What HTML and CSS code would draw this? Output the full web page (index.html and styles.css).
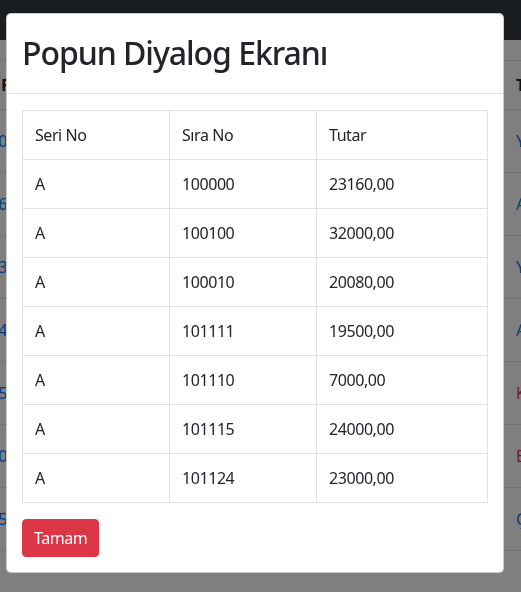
FILE: index.html
```html
<!DOCTYPE html>
<html lang="tr">
<head>
<meta charset="utf-8">
<title>Popun Diyalog Ekranı</title>
<link rel="stylesheet" href="styles.css">
</head>
<body>
<div class="page">
  <nav class="navbar"></nav>
  <div class="bg-table">
    <div class="bg-row bg-head">
      <div class="bg-cell bg-left bg-start">Fatura No</div>
      <div class="bg-mid"></div>
      <div class="bg-cell bg-right">Tarih</div>
    </div>
    <div class="bg-row">
      <div class="bg-cell bg-left link">2010</div>
      <div class="bg-mid"></div>
      <div class="bg-cell bg-right link">Yalova</div>
    </div>
    <div class="bg-row">
      <div class="bg-cell bg-left link">2006</div>
      <div class="bg-mid"></div>
      <div class="bg-cell bg-right link">Ankara</div>
    </div>
    <div class="bg-row">
      <div class="bg-cell bg-left link">2003</div>
      <div class="bg-mid"></div>
      <div class="bg-cell bg-right link">Yozgat</div>
    </div>
    <div class="bg-row">
      <div class="bg-cell bg-left link">2004</div>
      <div class="bg-mid"></div>
      <div class="bg-cell bg-right link">Adana</div>
    </div>
    <div class="bg-row">
      <div class="bg-cell bg-left link">2005</div>
      <div class="bg-mid"></div>
      <div class="bg-cell bg-right danger">Kars</div>
    </div>
    <div class="bg-row">
      <div class="bg-cell bg-left link">2010</div>
      <div class="bg-mid"></div>
      <div class="bg-cell bg-right danger">Edirne</div>
    </div>
    <div class="bg-row">
      <div class="bg-cell bg-left link">2005</div>
      <div class="bg-mid"></div>
      <div class="bg-cell bg-right link">Çorum</div>
    </div>
  </div>
</div>
<div class="backdrop"></div>
<div class="modal">
  <div class="modal-content">
    <div class="modal-header">
      <h2 class="modal-title">Popun Diyalog Ekranı</h2>
    </div>
    <div class="modal-body">
      <table class="table">
        <tr><td>Seri No</td><td>Sıra No</td><td>Tutar</td></tr>
        <tr><td>A</td><td>100000</td><td>23160,00</td></tr>
        <tr><td>A</td><td>100100</td><td>32000,00</td></tr>
        <tr><td>A</td><td>100010</td><td>20080,00</td></tr>
        <tr><td>A</td><td>101111</td><td>19500,00</td></tr>
        <tr><td>A</td><td>101110</td><td>7000,00</td></tr>
        <tr><td>A</td><td>101115</td><td>24000,00</td></tr>
        <tr><td>A</td><td>101124</td><td>23000,00</td></tr>
      </table>
      <button class="btn btn-danger" type="button">Tamam</button>
    </div>
  </div>
</div>
</body>
</html>
```
FILE: styles.css
```css
html, body {
  margin: 0;
  padding: 0;
}
body {
  font-family: "Noto Sans", "Open Sans", sans-serif;
  font-size: 16px;
  line-height: 1.5;
  letter-spacing: -0.027em;
  color: #212529;
  background: #fff;
  overflow: hidden;
  height: 592px;
}
.page {
  display: flex;
  flex-direction: column;
}
.navbar {
  height: 40px;
  background: #343a40;
}
.bg-table {
  margin-top: 20px;
  border-top: 1px solid #dee2e6;
}
.bg-row {
  display: grid;
  grid-template-columns: 7px 1fr 9px;
  height: 62px;
  border-bottom: 1px solid #dee2e6;
  align-items: center;
}
.bg-head {
  height: 48px;
  font-weight: 700;
}
.bg-cell {
  white-space: nowrap;
  overflow: hidden;
  display: flex;
}
.bg-left {
  justify-content: flex-end;
}
.bg-start {
  justify-content: flex-start;
  padding-left: 1px;
}
.bg-right {
  padding-left: 4px;
}
.link { color: #007bff; }
.danger { color: #dc3545; }

.backdrop {
  position: fixed;
  inset: 0;
  background: rgba(0, 0, 0, 0.5);
}
.modal {
  position: fixed;
  top: 13px;
  left: 6px;
  width: 498px;
}
.modal-content {
  background: #fff;
  border: 1px solid rgba(0, 0, 0, 0.2);
  border-radius: 5px;
  display: flex;
  flex-direction: column;
}
.modal-header {
  padding: 15px 15px 16px;
  border-bottom: 1px solid #dee2e6;
}
.modal-title {
  margin: 0;
  font-size: 32px;
  font-weight: 500;
  line-height: 48px;
  letter-spacing: -0.033em;
}
.modal-body {
  padding: 16px 15px 15px;
}
.table {
  width: 100%;
  border-collapse: collapse;
  margin-bottom: 16px;
}
.table td {
  border: 1px solid #dee2e6;
  padding: 12px;
  height: 24px;
  vertical-align: top;
}
.table td:nth-child(1),
.table td:nth-child(2) {
  width: 122px;
}
.btn {
  font-family: inherit;
  font-size: 16px;
  line-height: 24px;
  letter-spacing: inherit;
  padding: 6px 11px;
  border: 1px solid transparent;
  border-radius: 4px;
  cursor: pointer;
}
.btn-danger {
  background: #dc3545;
  border-color: #dc3545;
  color: #fff;
}
```
